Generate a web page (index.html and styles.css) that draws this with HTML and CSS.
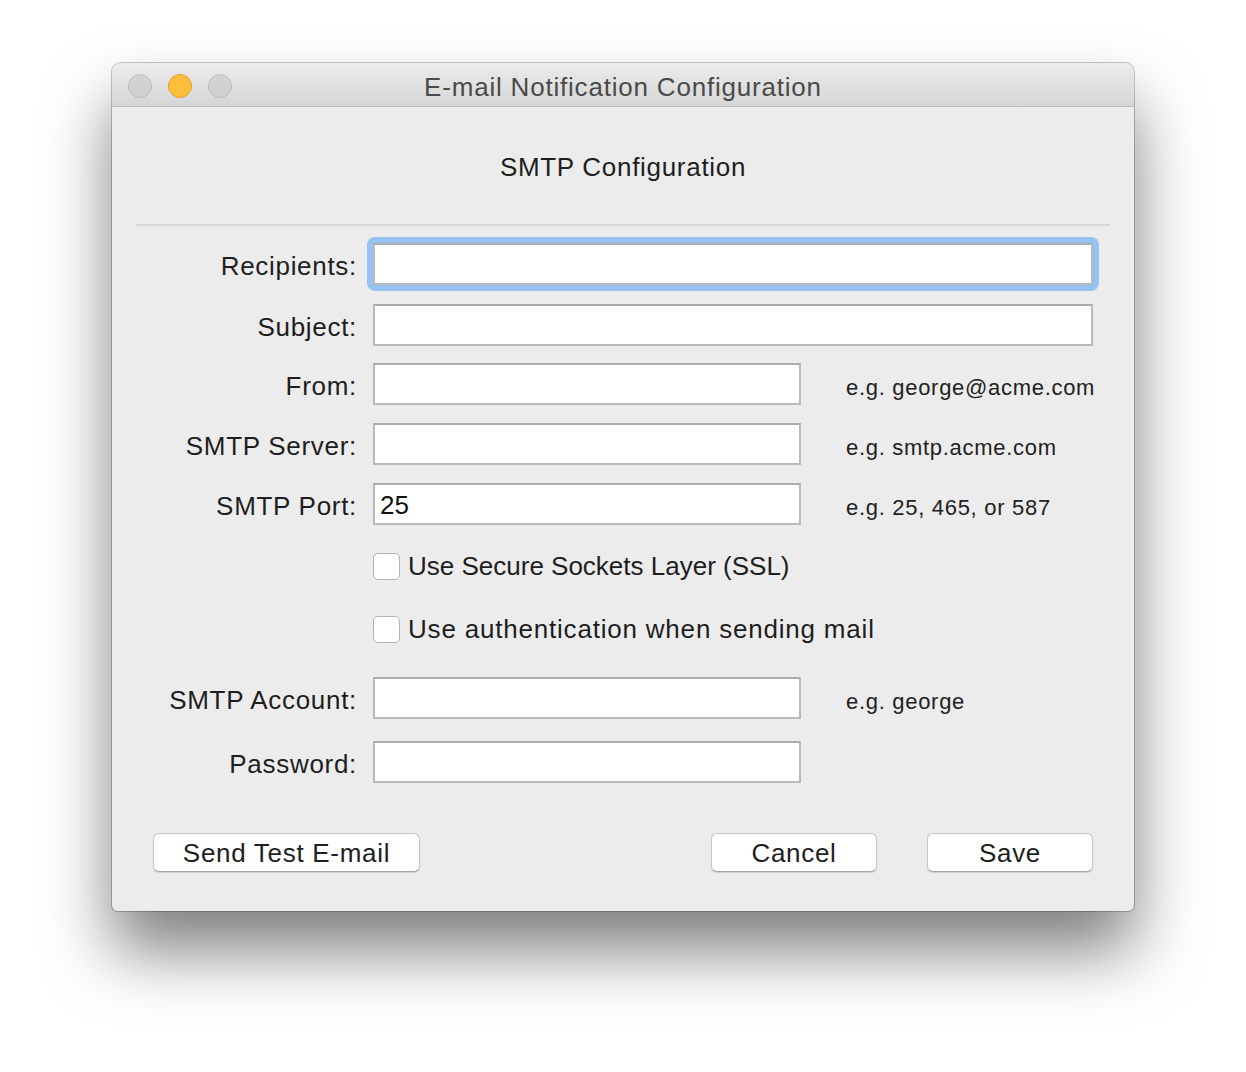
FILE: index.html
```html
<!DOCTYPE html>
<html lang="en">
<head>
  <meta charset="UTF-8">
  <title>E-mail Notification Configuration</title>
  <link rel="stylesheet" href="styles.css">
</head>
<body>
  <div class="window">
    <div class="titlebar">
      <div class="lights">
        <span class="light"></span>
        <span class="light yellow"></span>
        <span class="light"></span>
      </div>
      <div class="title">E-mail Notification Configuration</div>
    </div>
    <div class="content">
      <h1 class="heading">SMTP Configuration</h1>
      <div class="sep"></div>

      <div class="form">
        <div class="row r-recipients">
          <label class="lbl">Recipients:</label>
          <div class="ring"><input type="text" class="field wide"></div>
        </div>
        <div class="row r-subject">
          <label class="lbl">Subject:</label>
          <input type="text" class="field wide">
        </div>
        <div class="row r-from">
          <label class="lbl">From:</label>
          <input type="text" class="field short">
          <span class="hint">e.g. george@acme.com</span>
        </div>
        <div class="row r-server">
          <label class="lbl">SMTP Server:</label>
          <input type="text" class="field short">
          <span class="hint">e.g. smtp.acme.com</span>
        </div>
        <div class="row r-port">
          <label class="lbl">SMTP Port:</label>
          <input type="text" class="field short" value="25">
          <span class="hint">e.g. 25, 465, or 587</span>
        </div>
        <div class="row check r-ssl">
          <span class="lbl"></span>
          <span class="box"></span>
          <span class="check-text ssl">Use Secure Sockets Layer (SSL)</span>
        </div>
        <div class="row check r-auth">
          <span class="lbl"></span>
          <span class="box"></span>
          <span class="check-text auth">Use authentication when sending mail</span>
        </div>
        <div class="row r-account">
          <label class="lbl">SMTP Account:</label>
          <input type="text" class="field short">
          <span class="hint">e.g. george</span>
        </div>
        <div class="row r-password">
          <label class="lbl">Password:</label>
          <input type="password" class="field short">
        </div>
      </div>

      <div class="buttons">
        <button class="btn test">Send Test E-mail</button>
        <div class="right">
          <button class="btn">Cancel</button>
          <button class="btn">Save</button>
        </div>
      </div>
    </div>
  </div>
</body>
</html>
```

FILE: styles.css
```css
*{
  margin: 0;
  padding: 0;
  box-sizing: border-box;
}
html, body{
  min-height: 1072px;
}
body{
  background: #fff;
  font-family: "Liberation Sans", Arial, sans-serif;
  color: #1e1e1e;
  padding-top: 63px;
}
.window{
  width: 1022px;
  height: 848px;
  margin-left: 112px;
  background: #ececec;
  border-radius: 9px 9px 6px 6px;
  box-shadow: 0 0 0 1px rgba(0,0,0,0.22), 0 40px 66px rgba(0,0,0,0.5);
  overflow: hidden;
}
.titlebar{
  height: 44px;
  display: flex;
  align-items: center;
  position: relative;
  background: linear-gradient(#ececec, #d6d6d6);
  border-bottom: 1px solid #bdbdbd;
}
.lights{
  display: flex;
  gap: 16px;
  padding-left: 16px;
  padding-top: 2px;
}
.light{
  width: 24px;
  height: 24px;
  border-radius: 50%;
  background: #d1d1d1;
  border: 1px solid #bcbcbc;
}
.light.yellow{
  background: #ffbe3a;
  border-color: #e0a126;
}
.title{
  position: absolute;
  left: 0;
  right: 0;
  padding-top: 5px;
  text-align: center;
  font-size: 26px;
  letter-spacing: 0.8px;
  color: #4a4a4a;
}
.content{
  padding: 0 24px;
}
.heading{
  margin-top: 45px;
  font-size: 26px;
  line-height: 30px;
  font-weight: normal;
  letter-spacing: 0.7px;
  text-align: center;
}
.sep{
  height: 2px;
  margin-top: 42px;
  background: #d6d6d6;
}
.form{
  padding-top: 17px;
}
.row{
  display: flex;
  align-items: center;
  font-size: 26px;
  letter-spacing: 0.7px;
}
.lbl{
  width: 221px;
  margin-right: 16px;
  padding-top: 5px;
  text-align: right;
  flex: none;
}
.field{
  height: 42px;
  background: #fff;
  border: 2px solid #bababa;
  border-top-color: #ababab;
  font-family: inherit;
  font-size: 26px;
  color: #111;
  padding: 3px 5px 0;
  outline: none;
}
.wide{
  width: 720px;
}
.short{
  width: 428px;
}
.ring{
  margin: -6px;
  padding: 6px;
  border-radius: 8px;
  background: #95c2f2;
  display: flex;
}
.hint{
  margin-left: 45px;
  padding-top: 8px;
  font-size: 22px;
  letter-spacing: 0.7px;
  color: #222;
}
.r-subject{ margin-top: 19px; }
.r-from{ margin-top: 17px; }
.r-server{ margin-top: 18px; }
.r-port{ margin-top: 18px; }
.r-ssl{ margin-top: 27px; }
.r-auth{ margin-top: 35px; }
.r-account{ margin-top: 34px; }
.r-password{ margin-top: 22px; }
.check{
  height: 28px;
}
.check .lbl{
  padding-top: 0;
}
.check-text.ssl{
  letter-spacing: 0;
}
.check-text.auth{
  letter-spacing: 0.8px;
}
.box{
  width: 27px;
  height: 27px;
  border: 1px solid #b3b3b3;
  border-radius: 5px;
  background: #fff;
  margin-right: 8px;
  flex: none;
}
.buttons{
  display: flex;
  justify-content: space-between;
  margin-top: 50px;
  padding: 0 17px;
}
.right{
  display: flex;
  gap: 50px;
}
.btn{
  height: 39px;
  width: 166px;
  background: #fff;
  border: 1px solid #c6c6c6;
  border-bottom-color: #a6a6a6;
  border-radius: 6px;
  box-shadow: 0 1px 1px rgba(0,0,0,0.12);
  font-family: inherit;
  font-size: 26px;
  letter-spacing: 0.7px;
  color: #1e1e1e;
  padding-top: 2px;
}
.btn.test{
  width: 267px;
}
```
